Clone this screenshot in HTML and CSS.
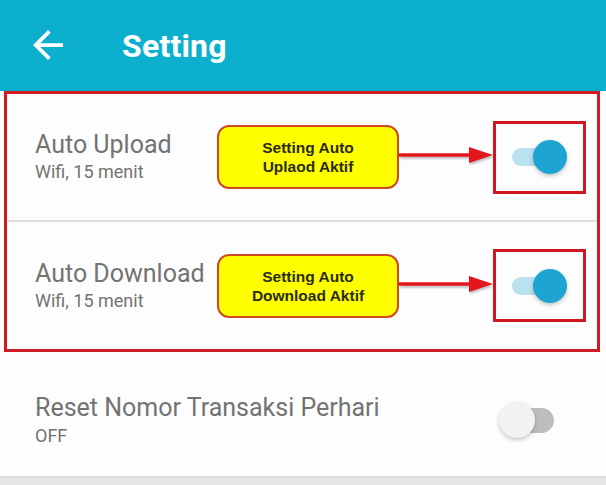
FILE: index.html
```html
<!DOCTYPE html>
<html lang="id">
<head>
 <meta charset="UTF-8">
 <meta name="viewport" content="width=device-width, initial-scale=1.0">
 <title>Setting</title>
 <link rel="stylesheet" href="styles.css">
</head>
<body>
 <header class="appbar">
  <svg class="back" viewBox="4 4 16 16" width="30" height="30" aria-hidden="true">
   <path d="M20 11H7.83l5.59-5.59L12 4l-8 8 8 8 1.41-1.41L7.83 13H20v-2z" fill="#fff"/>
  </svg>
  <h1>Setting</h1>
 </header>
 <main>
  <section class="group">
   <div class="row">
    <div class="label">
     <div class="title">Auto Upload</div>
     <div class="sub">Wifi, 15 menit</div>
    </div>
    <div class="callout">Setting Auto<br>Uplaod Aktif</div>
    <svg class="pointer" width="94" height="20" viewBox="0 0 94 20" aria-hidden="true">
     <line x1="0" y1="10" x2="74" y2="10" stroke="#e3161d" stroke-width="3.5"/>
     <polygon points="70,2 94,10 70,18" fill="#e3161d"/>
    </svg>
    <div class="mark">
     <div class="switch on"><span class="track"></span><span class="knob"></span></div>
    </div>
   </div>
   <div class="row">
    <div class="label">
     <div class="title">Auto Download</div>
     <div class="sub">Wifi, 15 menit</div>
    </div>
    <div class="callout">Setting Auto<br>Download Aktif</div>
    <svg class="pointer" width="94" height="20" viewBox="0 0 94 20" aria-hidden="true">
     <line x1="0" y1="10" x2="74" y2="10" stroke="#e3161d" stroke-width="3.5"/>
     <polygon points="70,2 94,10 70,18" fill="#e3161d"/>
    </svg>
    <div class="mark">
     <div class="switch on"><span class="track"></span><span class="knob"></span></div>
    </div>
   </div>
  </section>
  <div class="row plain">
   <div class="label wide">
    <div class="title">Reset Nomor Transaksi Perhari</div>
    <div class="sub">OFF</div>
   </div>
   <div class="switch off"><span class="track"></span><span class="knob"></span></div>
  </div>
 </main>
</body>
</html>
```

FILE: styles.css
```css
body {
margin: 0;
padding: 0;
font-family: Roboto, "Liberation Sans", sans-serif;
background-color: #e6e6e6;
}
.appbar {
height: 92px;
display: flex;
align-items: center;
background-color: #0db0cc;
color: #fff;
padding-left: 33px;
box-sizing: border-box;
}
.back {
display: block;
margin-top: -2px;
}
.appbar h1 {
margin: 0 0 0 59px;
font-size: 32px;
font-weight: 700;
letter-spacing: 0.2px;
}
main {
background-color: #fdfdfd;
}
.group {
margin: -1px 6px 0 4px;
border: 3px solid #cf1c24;
}
.row {
display: flex;
align-items: center;
height: 126px;
padding-left: 28px;
border-bottom: 2px solid #dedede;
}
.group .row:last-child {
border-bottom: none;
height: 127px;
}
.label {
width: 182px;
flex: none;
}
.label.wide {
width: auto;
}
.title {
font-size: 25px;
color: #737373;
line-height: 30px;
white-space: nowrap;
}
.sub {
font-size: 18px;
color: #737373;
line-height: 24px;
}
.callout {
width: 178px;
height: 60px;
flex: none;
display: flex;
align-items: center;
justify-content: center;
text-align: center;
background-color: #ffff00;
border: 2px solid #cf4a24;
border-radius: 12px;
font-family: "Liberation Sans", Arial, sans-serif;
font-weight: 700;
font-size: 15.5px;
line-height: 19px;
color: #2b2b10;
}
.pointer {
display: block;
flex: none;
margin-top: -4px;
filter: drop-shadow(1px 2px 1px rgba(0, 0, 0, 0.25));
}
.mark {
width: 87px;
height: 67px;
flex: none;
border: 3px solid #d0161e;
display: flex;
align-items: center;
justify-content: center;
}
.switch {
position: relative;
width: 55px;
height: 36px;
flex: none;
}
.track {
position: absolute;
border-radius: 14px;
}
.knob {
position: absolute;
border-radius: 50%;
}
.switch.on .track {
left: 0;
top: 9px;
width: 48px;
height: 18px;
background-color: #b9e1ee;
}
.switch.on .knob {
right: 0;
top: 1px;
width: 34px;
height: 34px;
background-color: #1ea4d3;
box-shadow: 0 2px 4px rgba(0, 0, 0, 0.22);
}
.row.plain {
padding-left: 35px;
padding-right: 52px;
padding-top: 12px;
box-sizing: border-box;
justify-content: space-between;
height: 126px;
background-color: #fdfdfd;
}
.row.plain .sub {
margin-top: 1px;
}
.switch.off .track {
left: 8px;
top: 6px;
width: 47px;
height: 25px;
background-color: #bdbdbd;
}
.switch.off .knob {
left: 0;
top: 0;
width: 36px;
height: 36px;
background-color: #f2f2f2;
box-shadow: 0 2px 4px rgba(0, 0, 0, 0.22);
}
```
